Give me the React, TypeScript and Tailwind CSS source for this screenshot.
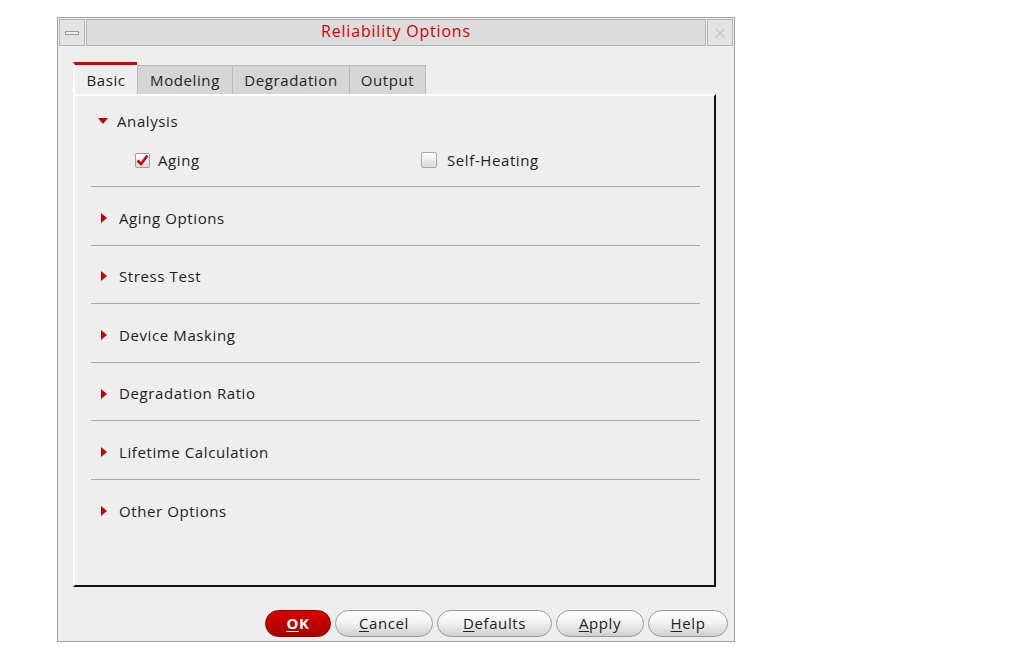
import React from "react";

const font = { fontFamily: '"Open Sans", "DejaVu Sans", sans-serif' };

function TriRight() {
  return (
    <svg width="8" height="10" viewBox="0 0 8 10" className="shrink-0">
      <polygon points="1,0 7,5 1,10" fill="#c40000" />
    </svg>
  );
}
function TriDown() {
  return (
    <svg width="10" height="8" viewBox="0 0 10 8" className="shrink-0">
      <polygon points="0,1 10,1 5,7" fill="#c40000" />
    </svg>
  );
}

function Section({ label }: { label: string }) {
  return (
    <div className="flex items-center h-[58.6px] border-t border-[#a9a9a9] pl-[9px] pt-[4px] gap-[11px]">
      <TriRight />
      <span>{label}</span>
    </div>
  );
}

function Btn({ children, w }: { children: React.ReactNode; w: string }) {
  return (
    <div
      className={`${w} h-[27px] rounded-full border border-[#9a9a9a] bg-gradient-to-b from-[#fdfdfd] via-[#f0f0f0] to-[#cfcfcf] flex items-center justify-center text-[15px] tracking-[0.6px] text-[#222]`}
    >
      {children}
    </div>
  );
}

export default function App() {
  return (
    <div className="w-[1011px] h-[655px] bg-white pl-[57px] pt-[17px]" style={font}>
      <div className="w-[678px] h-[625px] border border-[#a3a3a3] bg-[#eeeeee] flex flex-col">
        {/* title bar */}
        <div className="flex h-[27px] mt-[1px] mx-[1px] gap-[1px]">
          <div className="w-[26px] border border-[#b5b5b5] bg-[#e3e3e3] flex items-center justify-center">
            <div className="w-[14px] h-[4px] border border-[#9a9a9a] bg-[#f0f0f0]" />
          </div>
          <div className="flex-1 border border-[#b0b0b0] bg-[#dcdcdc] flex items-center justify-center pb-[3px] text-[16px] tracking-[0.8px] text-[#d00000]">
            Reliability Options
          </div>
          <div className="w-[26px] border border-[#b5b5b5] bg-[#e3e3e3] flex items-center justify-center text-[#c8c8c8] text-[16px] leading-none">
            ✕
          </div>
        </div>

        {/* tabs */}
        <div className="flex mt-[16px] ml-[15px] h-[32px] text-[15px] tracking-[0.6px] text-[#222]">
          <div className="w-[64px] border-t-[3px] border-t-[#c80000] border-l-2 border-l-white bg-[#eeeeee] flex items-center justify-center pt-[1px]">
            Basic
          </div>
          <div className="w-[96px] mt-[3px] border border-[#b8b8b8] border-b-0 bg-[#d6d6d6] flex items-center justify-center">
            Modeling
          </div>
          <div className="w-[117px] mt-[3px] border border-[#b8b8b8] border-b-0 border-l-0 bg-[#d6d6d6] flex items-center justify-center">
            Degradation
          </div>
          <div className="w-[76px] mt-[3px] border border-[#b8b8b8] border-b-0 border-l-0 bg-[#d6d6d6] flex items-center justify-center">
            Output
          </div>
        </div>

        {/* panel */}
        <div className="ml-[15px] w-[643px] h-[493px] border-l-2 border-l-white border-t-2 border-t-white border-r-2 border-r-[#111] border-b-2 border-b-[#111] pt-[12px] pl-[16px] pr-[14px] text-[15px] tracking-[0.6px] text-[#222]">
          <div className="flex items-center gap-[9px] pl-[7px] h-[26px]">
            <TriDown />
            <span>Analysis</span>
          </div>
          <div className="flex items-center h-[52px]">
            <div className="flex items-center gap-[8px] w-[330px] pl-[44px]">
              <div className="w-[15px] h-[15px] border border-[#9c9c9c] rounded-[2px] bg-gradient-to-b from-white to-[#dcdcdc] flex items-center justify-center">
                <svg width="13" height="12" viewBox="0 0 13 12">
                  <path d="M1.5 6.5 L5 10 L11.5 1.5" stroke="#d00000" strokeWidth="2.6" fill="none" />
                </svg>
              </div>
              <span>Aging</span>
            </div>
            <div className="flex items-center gap-[10px]">
              <div className="w-[16px] h-[16px] border border-[#a8a8a8] rounded-[2px] bg-gradient-to-b from-white to-[#dadada]" />
              <span>Self-Heating</span>
            </div>
          </div>
          <Section label="Aging Options" />
          <Section label="Stress Test" />
          <Section label="Device Masking" />
          <Section label="Degradation Ratio" />
          <Section label="Lifetime Calculation" />
          <Section label="Other Options" />
        </div>

        {/* buttons */}
        <div className="flex justify-end gap-[4px] mt-[23px] pr-[6px]">
          <div className="w-[66px] h-[27px] rounded-full bg-gradient-to-b from-[#d80000] to-[#a80000] border border-[#8a0000] flex items-center justify-center text-[15px] tracking-[0.6px] font-bold text-white">
            <span className="underline underline-offset-2">O</span>K
          </div>
          <Btn w="w-[98px]">
            <span className="underline underline-offset-2">C</span>ancel
          </Btn>
          <Btn w="w-[115px]">
            <span className="underline underline-offset-2">D</span>efaults
          </Btn>
          <Btn w="w-[88px]">
            <span className="underline underline-offset-2">A</span>pply
          </Btn>
          <Btn w="w-[80px]">
            <span className="underline underline-offset-2">H</span>elp
          </Btn>
        </div>
      </div>
    </div>
  );
}
